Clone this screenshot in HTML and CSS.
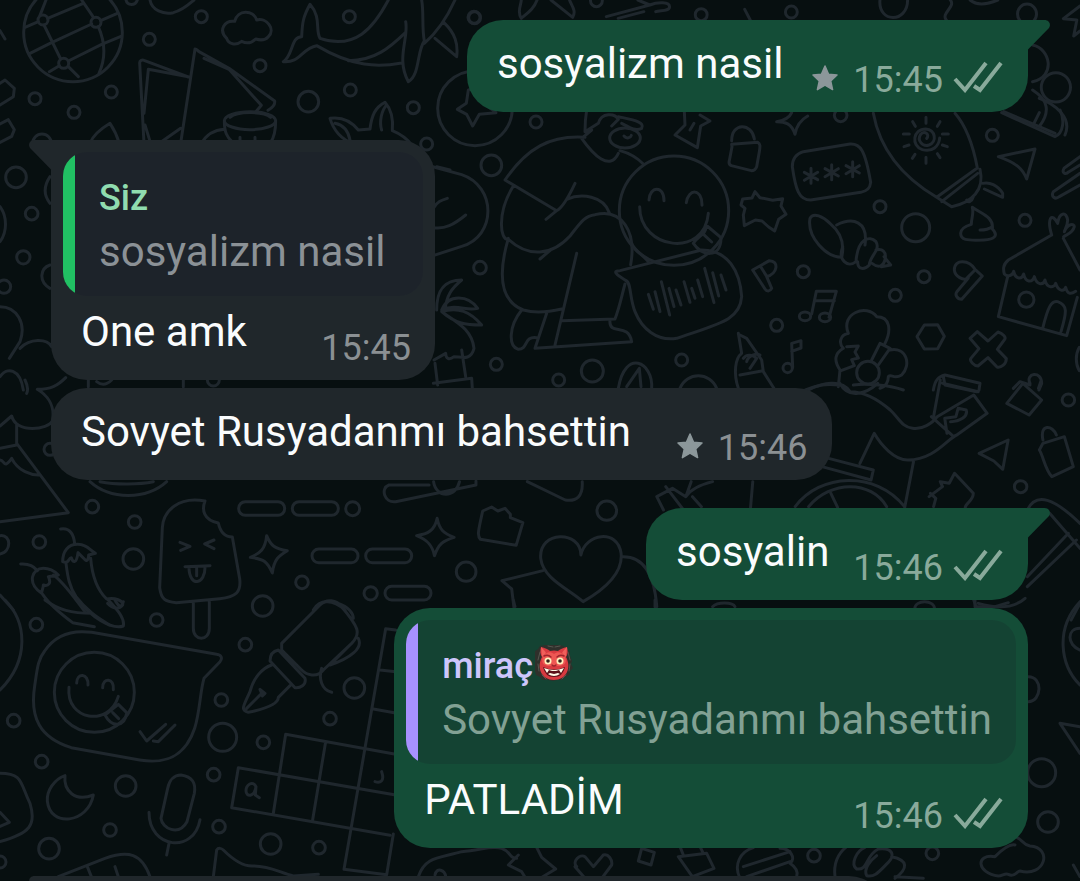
FILE: index.html
```html
<!DOCTYPE html>
<html lang="tr">
<head>
<meta charset="utf-8">
<meta name="viewport" content="width=device-width, initial-scale=1">
<title>Sohbet</title>
<link rel="stylesheet" href="styles.css">
</head>
<body>
<svg class="defs" aria-hidden="true">
  <symbol id="star" viewBox="0 0 26 26"><path d="M13 1l3.6 8.2 8.4.8-6.300 6 1.900 8.600L13 20.200l-7.600 4.400L7.300 16 1 10l8.400-.8z" fill="currentColor" stroke="currentColor" stroke-width="1.500" stroke-linejoin="round"/></symbol>
  <symbol id="ticks" viewBox="0 0 50 32"><path d="M2 18l10 11L33 2M21 25l6 4L48 2" fill="none" stroke="currentColor" stroke-width="4"/></symbol>
  <symbol id="tail" viewBox="0 0 23 30"><path d="M0 0H17.500C22.500 0 24.500 5 21.500 8.500L1 29.500H0z" fill="currentColor"/></symbol>
</svg>

<main class="chat">
  <svg class="wallpaper" viewBox="0 0 1080 881" preserveAspectRatio="xMidYMin slice" aria-hidden="true">
    <!-- top left -->
    <g transform="scale(.33333)">
      <circle cx="219" cy="97" r="148"/><circle cx="129" cy="60" r="15"/><circle cx="288" cy="67" r="15"/><circle cx="191" cy="190" r="15"/>
      <path d="M75 82l40-17M143 55L250 10M120 46L138 0M132 75l50 102M90 160l60-30 125-58M302 62l50-22M245 0l36 53M295 80c22 50 20 100 2 140M205 183l100-50 58-24M148 215l30-18M205 200l30 30"/>
      <path d="M450 0c5 30 40 45 70 38 30-8 50-28 62-38M378 0c4 18 28 18 34 0M0 92l15 25"/>
      <circle cx="448" cy="118" r="18"/><circle cx="604" cy="50" r="18"/><circle cx="780" cy="197" r="18"/><circle cx="1048" cy="50" r="18"/><circle cx="925" cy="305" r="31"/><circle cx="1051" cy="270" r="18"/><circle cx="1240" cy="323" r="18"/><circle cx="334" cy="276" r="18"/><circle cx="105" cy="296" r="18"/><circle cx="222" cy="337" r="18"/><circle cx="126" cy="430" r="28"/><circle cx="1422" cy="52" r="18"/><circle cx="1280" cy="432" r="18"/>
      <path d="M680 115c-26-25-6-55 24-51 8-36 56-36 66-4 30-8 58 28 35 50-12 14-28 10-38 7-16 16-32 12-42 7-18 14-40 8-45-9z"/>
      <path d="M0 250l15-10 28 25-3 25-40 25M0 372l25-13 18 30-8 20-35 18"/>
      <path d="M432 430l-13-242c0-6 8-10 13-7l133 50M432 340l13-132 120 22M585 147l-43 283M585 147c5 0 8 5 12 8l90 50 137 98c2 12-10 22-20 28M612 175l75 33 97 108-15 18M435 375l17 55M478 430l64-45"/>
      <ellipse cx="750" cy="362" rx="77" ry="27"/><path d="M673 362c0 35 8 50 25 65M827 362c0 35-5 50-15 65M690 352c20-18 100-20 122 0M605 430c15-28 40-40 68-42M720 412v12M765 412v12M270 430c10-28 35-45 60-60 12 18 22 40 28 60"/>
      <path d="M850 185c30-18 22-75 55-75 2-45 5-60 25-97 35 40 15 75 30 102 105 35 160-30 205-115M850 185c50 5 55-40 100-48 110 65 185 65 255 52M1045 182c80 0 125-40 172-85M1217 65c10 50-30 110 8 180 35-20 25-90 48-122C1265 80 1272 40 1265 0M1273 130c35-30 65-70 92-130M1305 115l65 55c5-40-5-70-38-102"/>
      <path d="M1060 430c-35-10-60-40-70-75 35-5 65 10 85 35l35-3c5-40 15-65 45-80 22 25 25 55 22 85 25 10 45 25 60 45M1050 420c-5-25-20-45-45-50M1145 390c-8-25 0-60 15-75"/>
      <circle cx="1425" cy="325" r="112"/><path d="M1405 270l-6 40-27 18 28 15 18 35 20-35 50-5-40-30-10-45z"/>
    </g>

    <!-- along the first outgoing bubble -->
    <g transform="translate(460) scale(.39541 .33333)">
      <ellipse cx="37" cy="53" rx="15" ry="18"/><ellipse cx="345" cy="2" rx="15" ry="18"/><ellipse cx="610" cy="44" rx="15" ry="18"/><ellipse cx="838" cy="36" rx="15" ry="18"/>
      <path d="M155 55c-12-20 0-40 0-55M155 55c20-20 32-30 40-55M230 0l55 52c10-20-3-35-8-52M370 50l110-35c20-10 50-10 50 5 0 15-25 10-35 15M400 55l65-20M450 0l30 15M1062 0c-5 70 70 70 70 0M720 28l14 32M1230 60c-15-20 25-40 10-60M1290 0c20 20 50 10 70 0"/>
      <ellipse cx="1434" cy="42" rx="24" ry="30"/><path d="M1568 18l-42 38 34 4-8 48 16-15M1448 135c45 10 60 95 0 110"/><ellipse cx="1507" cy="262" rx="37" ry="44"/>
      <path d="M1448 270c40 30 45 65 18 108M1465 295c35 15 85 55 65 110M1375 335l90 45 40 20"/>
    </g>

    <!-- centre: kneeling figure, smiley, voice note -->
    <g transform="translate(430 110) scale(.33333)">
      <circle cx="318" cy="36" r="18"/><circle cx="184" cy="166" r="31"/><circle cx="150" cy="473" r="19"/><circle cx="199" cy="763" r="18"/><circle cx="386" cy="810" r="18"/><circle cx="487" cy="783" r="33"/><circle cx="755" cy="750" r="18"/>
      <path d="M0 168l95 26c105 35 105 185 0 215L0 440M10 295c10-20 25-25 42-30M10 353c35 5 60-8 97-38"/>
      <path d="M465 82C360 75 290 115 225 210l155 92c20-10 40-50 55-82M380 302l-32 26M250 228c-50 80-40 165-15 160 60 55 130 50 185-10 35-45 45-60 75-64 80-20 125 50 107 150M410 268c45-20 110-10 128 40M235 385c-35 120-20 190 45 215 35 10 80 5 115-3M330 447l35-30M440 430l-65 275M395 632l160-5c15-40 20-70 30-105M540 630c-5 50 55 5 65 65l-290 20 35-105M275 600c-40 50-40 110-10 118 30 0 15-40 55-35M470 0c-5 30-5 45-5 65l40-25c10-35 50-30 60-12l-20 20M455 85l30-25M455 85c35 50 85 100 110 45M570 122c30 8 50 20 70 40"/>
      <ellipse cx="585" cy="84" rx="46" ry="30"/><path d="M582 78c8 10 20 5 22-2M565 20c45 10 80 15 70 35-20 10-40-5-60-15"/>
      <circle cx="732" cy="302" r="164"/><path d="M657 270c2-42 45-45 45 2M769 278c5-42 48-45 47 8M629 290c0 130 195 155 206 20M790 400c15-25 40-25 38-55l45 38c0 65-60 55-83 17M815 368l30 28M605 400c10 25 30 30 50 55"/>
      <path d="M570 482l245-62c80 0 115 65 120 140-5 70-65 80-195 125-60 10-105-30-125-80-18-45-10-90-30-95-25-15-40-28-15-28z"/>
      <path d="M655 553l15 45M675 545l15 60M694 515l25 100M717 535l15 55M738 540l15 45M762 515l18 62M785 535l10 30M803 510l15 50M824 475l28 103M848 488l18 70M873 495l15 45"/>
      <path d="M735 75l30-30-2-40M735 75l67 38 10-65 28-15-30-18M780 60l12-20"/>
      <path d="M20 600c0-50 15-90 75-90-30 25-45 45-50 90M35 600c20-50 80-45 108-5-35 10-60-15-108 5zM35 605c50-15 85 0 120 40-50 0-80-5-120-40zM35 605c40 30 90 50 97 110-10 40-40 25-60 25-15 12-25 5-25-10l-35 20M15 760l8 65M95 720l12 80M10 820l115-15 2 30"/>
      <path d="M565 835c20-120 105-80 100 0M590 830l38-55 5 55M750 835c20-50 90-50 110 0M925 670l10 60c-20 15-25 60-10 105M950 755c5-20 30-25 40-20"/>
    </g>

    <!-- right side -->
    <g transform="translate(740 110) scale(.33333)">
      <path d="M110 35c30-5 40-15 45-27M110 35c25 0 45 5 55 38 5-30 20-45 38-55M-25 103l78-6c8 5 8 10 5 28l-8 45c-3 8-8 12-16 12l-60-15c-6-3-8-8-6-15l8-42zM-25 92c0-55 60-55 68-5"/>
      <circle cx="302" cy="16" r="19"/><circle cx="420" cy="290" r="18"/><circle cx="527" cy="353" r="42"/><circle cx="190" cy="485" r="18"/><circle cx="552" cy="500" r="18"/><circle cx="466" cy="556" r="18"/><circle cx="110" cy="646" r="18"/><circle cx="855" cy="331" r="18"/><circle cx="757" cy="76" r="18"/><circle cx="859" cy="569" r="23"/><circle cx="384" cy="788" r="34"/>
      <path d="M190 125l140-23c30-2 45 15 62 115-2 18-10 25-30 30l-150 23c-35 0-45-30-55-100 0-22 10-38 33-45zM213 175v45M193 187l40 22M193 211l40-24M275 164v45M255 176l40 22M255 200l40-24M338 155v45M318 167l40 22M318 191l40-24"/>
      <path d="M400 10c20 110 85 190 190 252l122-88C700 110 680 50 645 10M590 262l45 28c60-12 100-50 85-112M605 275l108-85M680 270c5 10 15 5 20-10M728 220c20-5 45 5 60 30v12l-55-25M558 22v18M518 35l8 14M600 35l-8 14M490 72h18M607 72h18M492 110l15-5M622 110l-15-5M517 145l8-12M600 143l-8-12M558 142v18M560 85c10-10-5-25-18-12-12 18 5 38 25 32 25-10 20-45-10-48-38 0-45 50-10 62 30 8 50-10 52-35"/>
      <path d="M785 8l160 72c25-10 30-50 15-80M878 48l20-40M775 140l110-23-25 90c-12-30-30-48-85-67zM1020 140l-48 35c-8 15 5 20 15 10l33-20M1020 190l-80 55c-8 15 5 25 18 15l62-35"/>
      <path d="M45 245l15 18 38 8 30-5-5 22 15 25-22 15-12 35-18-12-20-18-20-3-33 17-3-32 5-20-12-10 5-18 28-3z"/>
      <path d="M210 325c10-20 40-5 60 15 30 25 45 60 35 102-45 0-105-60-95-117zM290 345c50-25 95-10 85 60M308 410c-15 40 15 65 40 45 5-70 40-80 60-60 15 25-20 45-20 70-15 15-35 15-35-10M408 420c20-5 30 5 28 25-5 25-20 30-40 15M432 440l20 25-28 5"/>
      <path d="M697 292c30 20 65 30 60 65 20 20 5 32-25 33-55 2-70 0-70-20 0-15 15-22 32-27 0-20 8-30 3-51zM720 360c20 0 30-5 37-10M935 375c-15-50 0-70 18-35 5-35 25-35 30-10 0 20-10 30-10 35 10-25 30-25 30-15-5 20-20 22-32 30M935 375l-130 75c-18 15-15 30-12 42 10 10 25 5 28-8 5 25 25 25 30 8 5 25 25 28 32 8 8 28 28 25 32 10 5 25 28 25 32 10 8 25 25 25 30 12 5 20 15 22 30 12M970 385l50 95M803 500l-28 120 205 57 32-115M908 655c15-60 25-85 45-80 30 10 28 30 10 90"/>
      <path d="M38 480l50-28c30 0 25 40-8 48l15 35c-5 10-15 10-20 2zM62 470l20 32M215 612l14-68h60l-22 78M225 572h58"/><ellipse cx="195" cy="619" rx="17" ry="13"/><ellipse cx="255" cy="622" rx="17" ry="13"/><path d="M158 772l-3-72 28-8v22l-28 10"/><circle cx="143" cy="774" r="14"/>
      <path d="M643 480c0-35 45-30 62-2l22 20-62 70c-15 0-20-15-15-22l35-42c-15 10-40-5-42-24zM680 505l22-22M553 645l40-1 20 35-20 37-40 1-22-37zM690 685l22-20 32 28 30-27c15 5 25 15 20 22l-22 30 27 28c0 15-15 28-28 25l-27-28-30 25c-12 0-25-15-22-22l25-30z"/>
      <path d="M325 670c-25-60 55-90 85-50 40 0 45 40 25 80M325 670c-25 5-30 30-15 45-25 15-30 35-10 65l-5 50M320 710l35-2-10 18 10 18-20 5 8 18-40 15M395 750l25-50 30 15-35 50M450 720c50-10 65 45 35 75-25 15-30-5-40 5 0 20-10 30-25 35M340 825c40-5 110 0 150 15M205 840c25-15 50-20 95-15M0 675l20 10 45 65 5 35 35 55M0 795l65-12M10 745c10-15 30-10 40 0l-20 30M580 840c5-30 15-40 35-45l105 25-3 20M610 800l5 25 95 20M820 835l20-20 30 10M870 820c-15-30 35-40 35 0l-8 20M1018 712c-12 20-12 50 0 70"/>
    </g>

    <!-- beside the incoming bubbles -->
    <g transform="translate(0 130) scale(.33333)">
      <circle cx="48" cy="142" r="31"/><circle cx="95" cy="251" r="19"/><circle cx="70" cy="382" r="20"/><circle cx="12" cy="470" r="20"/>
      <path d="M0 230c22 30 22 75 0 105M150 140c-20 30-20 55 0 80M150 405c-30 10-35 50 0 70M0 530c50 0 80 50 60 105l-32 50M60 655c30-30 80-30 95-5M0 740c20-30 60-25 70 40M1310 110l40 10"/>
    </g>
    <g transform="translate(0 380) scale(.33333)">
      <path d="M0 138l35-30c15 55 110 40 122 15 10-50-20-80-45-95 40 0 60-10 85-35M75 0c10 20 10 30 5 40M50 135v55l155 208L0 425M0 205l50-10M0 240c15 0 10 30 35-5 20 40 60 50 80 50M0 467c35-5 35 50 0 55M270 305c60 55 170 55 230 0M300 305c50 10 120 8 160 0"/>
      <circle cx="277" cy="380" r="19"/><circle cx="404" cy="426" r="19"/><circle cx="118" cy="486" r="19"/><circle cx="400" cy="537" r="31"/><circle cx="150" cy="208" r="18"/><circle cx="1058" cy="386" r="21"/><circle cx="906" cy="607" r="19"/><circle cx="788" cy="678" r="31"/><circle cx="1112" cy="640" r="20"/><circle cx="640" cy="0" r="18"/>
      <rect x="716" y="365" width="138" height="41" rx="20"/><rect x="877" y="365" width="138" height="41" rx="20"/><rect x="936" y="507" width="138" height="41" rx="20"/><rect x="1097" y="507" width="138" height="41" rx="20"/><rect x="1155" y="619" width="138" height="41" rx="20"/>
      <path d="M615 363c-80-15-125 30-128 80l-8 180c5 35 15 42 50 45l130-12c50-5 65-20 60-60l-22-125c-20 0-35-10-42-42-45-8-50-40-40-66zM540 487l30 12-28 12M642 480l-28 12 28 14M555 560l75-3M567 562c0 60 50 55 48-4M590 565v22M580 665v80c0 40 48 40 48 0v-80"/>
      <path d="M800 467c12 30 25 40 62 45-25 15-40 25-45 67-15-35-25-42-66-47 30-12 45-25 49-65z"/>
      <path d="M182 447c30-5 40 20 42 45M188 545c0-30 15-52 45-52 25 0 35 15 53 27l-20 5c0 12-5 20-10 15l-22-22c-5 35-15 30-20 15-10 0-5 20-26 12zM198 550c5 40 10 70 30 100 40 50 70 65 100 85M272 535c5 60 20 95 48 122 25-5 50 5 48 18-10 15-30 10-45-5M62 552c30-2 40 10 50 20M125 640c-45-30-30-75 5-75 20 0 35 10 45 20l-30 5c10 20 0 30-15 25 0 10-5 15-5 25zM160 585c30 20 60 65 95 110M128 643c20 30 50 55 90 85l65 12M0 645l40 45M940 690c20-35 60-30 95 0M265 20V0M550 20V0M290 5c15 12 30 10 45-5"/>
    </g>
    <g transform="translate(380 380) scale(.44643 .33333)">
      <path d="M20 315h90M20 315c-20 10-10 55 15 50l180-50v-12M120 305c5 50 50 50 58 0M330 305l85 55c25 5 40-10 38-55"/>
      <path d="M128 415c5 35 15 45 38 57-25 10-35 20-44 55-5-35-20-50-40-60 25-5 40-15 46-52zM230 393l20-12 14 12 16-8 12 18v10l28 15-15 68-80-18c-8-10-5-25 5-85z"/>
      <ellipse cx="508" cy="392" rx="22" ry="29"/><ellipse cx="193" cy="575" rx="22" ry="29"/>
      <path d="M450 525c0-75-95-75-90 10 5 60 60 90 95 130 45-35 90-85 85-145-8-75-80-60-90 5zM365 572l-92 30 22 25 5 55M545 530c50 0 70 60 75 150M745 680c10-15 45-15 50 0"/>
      <path d="M635 390l-15-40 35-25 30 25 12-45M640 320l40 70M745 305c-30 10-50 25-60 45M835 305l-5 78M700 350l20 30M930 380c55-100 180-110 245 0M960 380c50-80 140-80 175 0M1010 340l15 42M1005 235l100 35-5 30-110-40M1075 250l32-90c15 35 45 80 75 80 60 0 90-65 110-75l68-65-30-55-82 65c-10 20-35 40-55 35-25-5-30-30-50-55-30-35-60-55-90-55-20-40-60-25-100-5M1195 245l-20 140M1235 110l50 60M1270 160l-5-45 25-5 5-25 18 5c5 20-15 35-35 35M1240 110l15-110M1260 10l80 25M1030 10c20 50 60 30 85 0"/>
      <path d="M1230 350l30-30-5-15 20 5 12-30 42 60c0 25-20 30-18 45M1240 380l5-25-12-15M1342 220l65-40-12 88-20-25zM1440 10l42 50-28 45-50-35zM1475 25l5-20M1485 190l48-20 20 90-48 30c-15-20-20-65-28-80zM1485 180c-8-50 22-45 30-15"/><ellipse cx="1435" cy="320" rx="14" ry="18"/><ellipse cx="1542" cy="60" rx="14" ry="18"/>
      <path d="M1450 390c20-55 60-35 118 40M1500 400l68 105M1450 590l92-130M1450 620l110-140M1340 670c40 15 80 15 105-15M1330 660l5 20M1568 670l-20 50"/><ellipse cx="1220" cy="685" rx="22" ry="20"/>
    </g>

    <!-- bottom left: sticker bubble, pen, crossword -->
    <g transform="translate(0 600) scale(.33333)">
      <path d="M15 0c65 65 75 180-15 270M135 0c40 30 80 40 140 40M235 0c35 50 100 90 135 78 5-25-20-50-45-78M345 0c10 20 20 25 25 5"/>
      <circle cx="109" cy="74" r="19"/><circle cx="470" cy="60" r="19"/><circle cx="736" cy="134" r="19"/><circle cx="664" cy="300" r="19"/><circle cx="668" cy="412" r="42"/><circle cx="790" cy="427" r="19"/><circle cx="641" cy="524" r="19"/><circle cx="990" cy="356" r="19"/><circle cx="1063" cy="264" r="31"/><circle cx="41" cy="362" r="19"/><circle cx="125" cy="485" r="19"/><circle cx="377" cy="558" r="31"/><circle cx="330" cy="690" r="19"/><circle cx="147" cy="746" r="31"/><circle cx="657" cy="680" r="19"/><circle cx="812" cy="732" r="31"/><circle cx="957" cy="743" r="19"/><circle cx="0" cy="786" r="18"/>
      <path d="M275 97l375 66c15 2 18 12 10 22l-48 50c-12 40-12 100-28 150-25 75-75 110-165 95l-205-37c-95-30-125-90-110-185 8-55 10-80 30-105 30-45 75-65 141-56z"/>
      <circle cx="283" cy="277" r="120"/><path d="M230 249c0-32 36-30 34 6M308 263c0-32 36-30 32 6M207 262c-10 100 120 120 148 27M315 345l40-32 25 25c-5 45-45 45-65 7zM338 338l18 18M420 395l20 28 57-50M460 423l15 2 50-50"/>
      <path d="M195 527c-5 45 30 80 85 58-15 85-130 100-138 18-2-30 20-65 53-76zM543 525c35 5 45 25 40 55l-22 85c-25 45-75 20-78-10l20-90c5-25 20-40 40-40zM447 637c0 110 135 125 153 22M507 730l-7 35"/>
      <path d="M0 520c70 0 60 30 90 90 20 65 0 90-90 115M0 637l28 30-28 12M175 830l140-55c70-25 110-15 135 55M262 800l12 30M345 800l10 30M640 830l10-80c5-8 15-5 20 0 30 30 60 50 90 48 50 0 80 20 120 30l75-5"/>
      <path d="M845 130l115-115c20-20 50-15 65 5 50 60 60 80 30 110l-85 80c-20 25-50 15-65 0l-60-60zM835 150l80 85c5 20-15 30-30 28l-75-80c0-20 10-30 25-33zM815 195c-30 10-55 40-65 80-20 45-30 55-5 62 50-10 90-25 90-45l35-35M740 325l45-45M785 280l-5-12 15 12-8 8M1015 10c30 10 45 30 45 45M1075 115c15 30-25 60-85 80l60-60M965 205c-10 30 0 65 30 72"/>
      <path d="M857 403l330 60M715 503l472 82M695 623l475 83M857 403l-37 237M977 425l-40 240M1187 90l-30-4-125 722 128 16 20-122M715 503l-20 120M1140 210l47 5M1120 327l67 12M768 560c-10-20-30-5-30 12 0 20 25 20 30-12l-2 25 12 8M1145 515c10 30-5 35-20 30"/>
    </g>
    <g transform="translate(390 600) scale(.33333)">
      <path d="M370 0l5 20M795 20V0M85 830c20-60 60-55 130-75 60-5 90-20 120-10 30 10 20 30 45 30M440 742l15 30 42 35-25 15-25 15M385 765l-30 30 40 20 12 20M560 800c-15-15 10-40 25-30l25 30 30-35c15-5 28 15 25 30l-30 40M555 800l30 35M755 745l38 12-10 38-38-12zM865 770l85-10 22 45-65 25zM880 765l-10-25M940 760l-10-20M1050 835c-20-40 0-80 40-92M1060 800l140-45M1070 830l130-45M135 825c5-25 30-15 32 5"/>
    </g>
    <g transform="translate(780 600) scale(.33333)">
      <path d="M585 0v20h60l40-12M900 5c-75 80-60 190 0 250M900 85c-40 0-40 50 0 65M745 230c45 0 40 75 0 75M900 380l-60-10 60 90M705 735c-20-5-55 30-60 35-60-10-55 50 10 58 12 0 20-10 30-5 20 10 25-10 35-10 75 20 100-70 30-75-25-5-20-20-45-28M880 795l20 35"/>
      <circle cx="785" cy="518" r="42"/><circle cx="804" cy="666" r="31"/><circle cx="457" cy="760" r="19"/><circle cx="102" cy="767" r="19"/>
      <path d="M0 745c30 0 50 30 30 45 15 10 25 25 20 40M165 830c-5-40 10-70 35-90M255 742c-25 10-45 50-25 65 35 5 25-40 65-60 45-5 50 20 30 40-30 30-40 45-65 40-10-20 10-45 30-60M335 770c50 10 50 35 10 65M345 830l85 5"/>
    </g>
  </svg>

  <section class="group">
    <article class="bubble out lead">
      <svg class="tail"><use href="#tail"/></svg>
      <div class="row"><p class="text">sosyalizm nasil</p>
        <div class="meta"><svg class="star"><use href="#star"/></svg><time>15:45</time><svg class="ticks"><use href="#ticks"/></svg></div></div>
    </article>
  </section>

  <section class="group">
    <article class="bubble in lead reply">
      <svg class="tail"><use href="#tail"/></svg>
      <blockquote class="quote"><p class="name">Siz</p><p class="quoted">sosyalizm nasil</p></blockquote>
      <div class="row"><p class="text">One amk</p><div class="meta"><time>15:45</time></div></div>
    </article>
    <article class="bubble in">
      <div class="row wide"><p class="text">Sovyet Rusyadanmı bahsettin</p>
        <div class="meta"><svg class="star"><use href="#star"/></svg><time>15:46</time></div></div>
    </article>
  </section>

  <section class="group">
    <article class="bubble out lead">
      <svg class="tail"><use href="#tail"/></svg>
      <div class="row tight"><p class="text">sosyalin</p>
        <div class="meta"><time>15:46</time><svg class="ticks"><use href="#ticks"/></svg></div></div>
    </article>
    <article class="bubble out reply">
      <blockquote class="quote"><p class="name">miraç<svg class="emoji" viewBox="0 0 38 38" role="img" aria-label="ogre">
        <path d="M19 1l5 0 5 1 2 3 4 3 0 4 2 5-1 3 2 4-3 3-1 4-4 2-3 3-5 0-4 1-5-1-5 0-3-3-4-2-1-4-3-3 1-4-1-4 2-4 0-4 4-3 2-3 5-1z" fill="#2f302b"/>
        <path d="M5 8l-2 8M3 20l1 7M33 8l2 8M35 20l-1 7M7 31l4 4M31 31l-4 4M13 2l5 1M25 2l-5 1" stroke="#56564f" stroke-width="1" stroke-linecap="round"/>
        <path d="M6 3c4 1 7 2 9 4q4-1 8 0c2-2 5-3 9-4 1 4 1 7-1 10 6 11 0 23-12 23S1 24 7 13C5 10 5 7 6 3z" fill="#d93a40"/>
        <path d="M8 13c3-5 7-6 11-3 4-3 8-2 11 3 3 7-3 9-6 9H14c-3 0-9-2-6-9z" fill="#ee5753"/>
        <path d="M6 3c2 2 4 4 5 6l-4 4zM32 3c-2 2-4 4-5 6l4 4z" fill="#f0605b"/>
        <circle cx="13" cy="17" r="3.500" fill="#fff0bd"/><circle cx="25" cy="17" r="3.500" fill="#fff0bd"/><circle cx="13" cy="17" r="1.800" fill="#33201d"/><circle cx="25" cy="17" r="1.800" fill="#33201d"/>
        <path d="M9 12q4-2 7 1M29 12q-4-2-7 1M17 21q2 2 4 0" fill="none" stroke="#9c252c" stroke-width="1.400" stroke-linecap="round"/>
        <path d="M8 23q11 5 22 0-2 10-11 10T8 23z" fill="#5c1119"/>
        <path d="M9 24l3 5 2-3 3 1h4l3-1 2 3 3-5q-10 4-20 0zM13 30l2-1 4 1 4-1 2 1q-6 4-12 0z" fill="#fffbe8"/>
      </svg></p><p class="quoted">Sovyet Rusyadanmı bahsettin</p></blockquote>
      <div class="row"><p class="text">PATLADİM</p>
        <div class="meta"><time>15:46</time><svg class="ticks"><use href="#ticks"/></svg></div></div>
    </article>
  </section>

  <section class="group">
    <article class="bubble in lead next"><svg class="tail"><use href="#tail"/></svg></article>
  </section>
</main>
</body>
</html>
```
FILE: styles.css
```css
* { box-sizing: border-box; }

body {
  margin: 0;
  background: #070f10;
  font-family: Roboto, "Noto Sans", sans-serif;
}

p, blockquote { margin: 0; }

.defs { position: absolute; width: 0; height: 0; }

.chat {
  position: relative;
  height: 100vh;
  overflow: hidden;
  display: flex;
  flex-direction: column;
  gap: 28px;
  padding: 20px 52px 0 51px;
}

.wallpaper {
  position: absolute;
  inset: 0;
  width: 100%;
  height: 100%;
  fill: none;
  stroke: #1f272d;
  stroke-width: 3px;
  stroke-linejoin: round;
  stroke-linecap: round;
}

.wallpaper * { vector-effect: non-scaling-stroke; }

.group {
  position: relative;
  flex: none;
  display: flex;
  flex-direction: column;
  gap: 8px;
}

.bubble {
  position: relative;
  padding: 12px;
  border-radius: 36px;
  color: #fafcfd;
}

.in { align-self: flex-start; background: #20272b; }
.out { align-self: flex-end; background: #144d37; }
.in.lead { border-top-left-radius: 0; }
.out.lead { border-top-right-radius: 0; }
.in.reply { min-width: 384px; }

.tail {
  position: absolute;
  top: 0;
  width: 23px;
  height: 30px;
}

.in .tail { left: -22px; color: #20272b; transform: scaleX(-1); }
.out .tail { right: -22px; color: #144d37; }

.row {
  display: flex;
  justify-content: space-between;
  align-items: flex-end;
  gap: 28px;
}

.tight { gap: 24px; }
.wide { gap: 45px; }

.text {
  padding: 8px 0 12px 18px;
  font-size: 42px;
  line-height: 48px;
}

.reply .text { padding-top: 12px; }

.meta {
  display: flex;
  align-items: flex-start;
  gap: 10px;
  padding-right: 12px;
  font-size: 36px;
  line-height: 40px;
  color: #8b9093;
}

.out .meta { padding-right: 13px; color: #89aa9b; }

.star {
  width: 28px;
  height: 26px;
  margin: 5px 4px 0 0;
  color: #8c979a;
}

.ticks { width: 50px; height: 32px; margin-top: 1px; }

.quote {
  padding: 24px 24px 20px 36px;
  border-radius: 24px;
  background: linear-gradient(to right, #21c063 12px, #1d232a 12px);
}

.out .quote { background: linear-gradient(to right, #a791ff 12px, #144333 12px); }

.name {
  display: flex;
  align-items: flex-start;
  gap: 2px;
  margin-bottom: 8px;
  font-size: 36px;
  font-weight: 500;
  line-height: 44px;
  color: #90dcaf;
}

.out .name { color: #cdc6fb; }

.quoted {
  font-size: 42px;
  line-height: 48px;
  color: #8b9196;
}

.out .quoted { color: #82a194; }

.emoji { width: 38px; height: 38px; }

.next { width: 834px; height: 92px; }
```
